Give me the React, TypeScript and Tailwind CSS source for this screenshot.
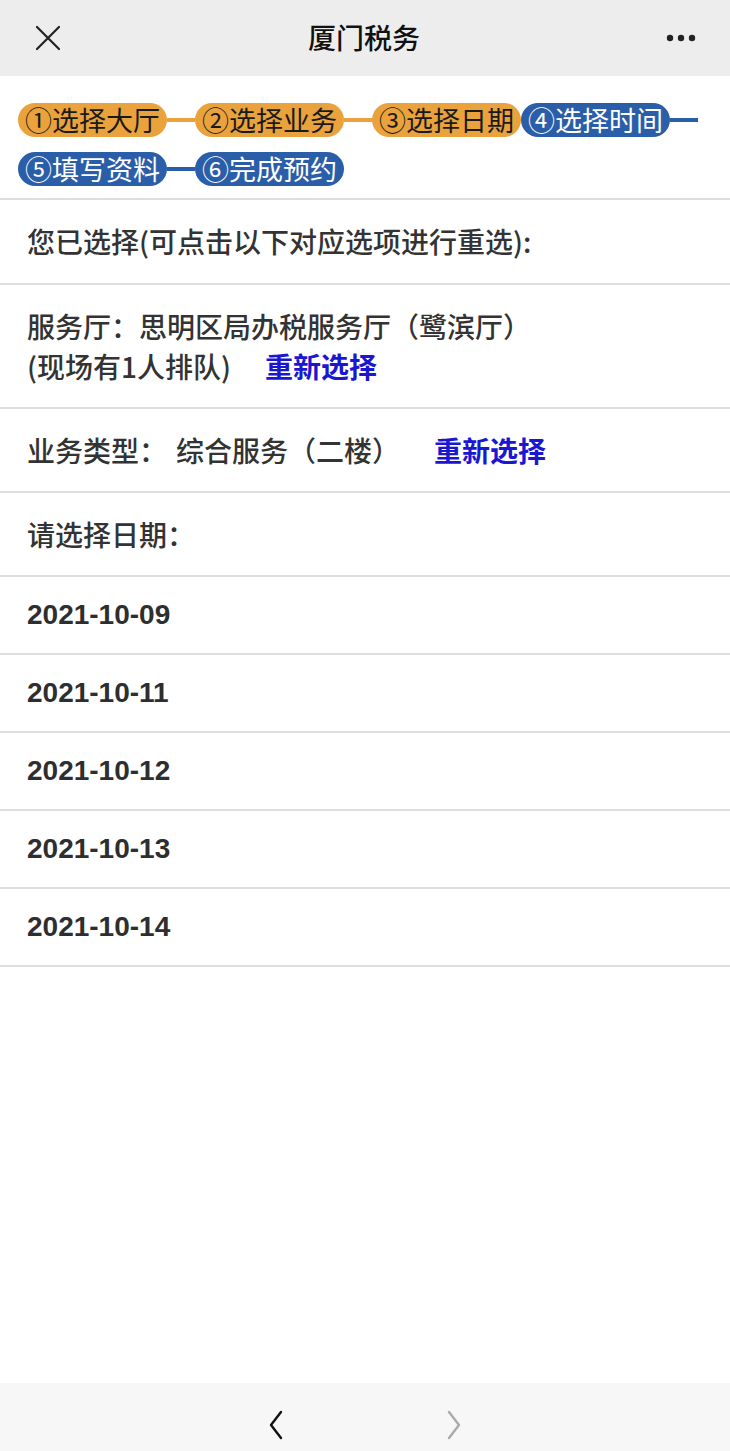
import React from 'react'

const cjk = { fontFamily: '"Noto Sans CJK SC", "Noto Sans", sans-serif' }

type Step = { label: string; done: boolean; line: boolean }

const steps: Step[] = [
  { label: '①选择大厅', done: true, line: true },
  { label: '②选择业务', done: true, line: true },
  { label: '③选择日期', done: true, line: false },
  { label: '④选择时间', done: false, line: true },
  { label: '⑤填写资料', done: false, line: true },
  { label: '⑥完成预约', done: false, line: false },
]

const dates = ['2021-10-09', '2021-10-11', '2021-10-12', '2021-10-13', '2021-10-14']

const App: React.FC = () => {
  return (
    <div className="w-[730px] h-[1451px] flex flex-col bg-white text-[#333]" style={cjk}>
      {/* top bar */}
      <div className="h-[76px] shrink-0 bg-[#ededed] flex items-center justify-between px-[34px]">
        <svg width="28" height="28" viewBox="0 0 28 28" fill="none" stroke="#222" strokeWidth="2.2" strokeLinecap="round">
          <path d="M3 3 L25 25 M25 3 L3 25" />
        </svg>
        <div className="text-[28px] font-medium text-[#111] leading-none -mt-[2px]">厦门税务</div>
        <svg width="30" height="8" viewBox="0 0 30 8" fill="#222">
          <circle cx="4" cy="4" r="3.2" />
          <circle cx="15" cy="4" r="3.2" />
          <circle cx="26" cy="4" r="3.2" />
        </svg>
      </div>

      {/* steps */}
      <div className="shrink-0 px-[18px] pt-[27px] pb-[12px] flex flex-wrap items-center gap-y-[15px] border-b-2 border-[#dedede]">
        {steps.map((s) => (
          <React.Fragment key={s.label}>
            <div
              className={`h-[34px] leading-[34px] px-[7px] rounded-full text-[27px] whitespace-nowrap ${
                s.done ? 'bg-[#eaa23c] text-[#1a1a1a]' : 'bg-[#2b5ea8] text-white'
              }`}
            >
              {s.label}
            </div>
            {s.line && <div className={`w-[28px] h-[4px] ${s.done ? 'bg-[#eaa23c]' : 'bg-[#2b5ea8]'}`} />}
          </React.Fragment>
        ))}
      </div>

      {/* selections */}
      <div className="px-[27px] py-[21px] leading-[41px] text-[28px] font-medium border-b-2 border-[#dedede]">
        您已选择(可点击以下对应选项进行重选):
      </div>
      <div className="px-[27px] py-[21px] leading-[40px] text-[28px] font-medium border-b-2 border-[#dedede]">
        <div>服务厅：思明区局办税服务厅（鹭滨厅）</div>
        <div className="flex">
          <span>(现场有1人排队)</span>
          <span className="ml-[34px] font-bold text-[#1a16d2]">重新选择</span>
        </div>
      </div>
      <div className="px-[27px] py-[21px] leading-[40px] text-[28px] font-medium border-b-2 border-[#dedede] flex">
        <span>业务类型：</span>
        <span className="ml-[9px]">综合服务（二楼）</span>
        <span className="ml-[34px] font-bold text-[#1a16d2]">重新选择</span>
      </div>
      <div className="px-[27px] py-[21px] leading-[40px] text-[28px] font-medium border-b-2 border-[#dedede]">
        请选择日期：
      </div>

      {/* dates */}
      {dates.map((d) => (
        <div
          key={d}
          className="px-[27px] py-[18px] leading-[40px] text-[28px] font-bold text-[#2e2e2e] border-b-2 border-[#dedede]"
          style={{ fontFamily: '"Liberation Sans", Arial, sans-serif' }}
        >
          {d}
        </div>
      ))}

      <div className="flex-1" />

      {/* bottom nav */}
      <div className="h-[68px] shrink-0 bg-[#f7f7f7] flex items-center justify-center gap-[164px] pt-[16px]">
        <svg width="14" height="30" viewBox="0 0 14 30" fill="none" stroke="#111" strokeWidth="2.4" strokeLinecap="round" strokeLinejoin="round">
          <path d="M12 2 L2 15 L12 28" />
        </svg>
        <svg width="14" height="30" viewBox="0 0 14 30" fill="none" stroke="#aaa" strokeWidth="2.4" strokeLinecap="round" strokeLinejoin="round">
          <path d="M2 2 L12 15 L2 28" />
        </svg>
      </div>
    </div>
  )
}

export default App
